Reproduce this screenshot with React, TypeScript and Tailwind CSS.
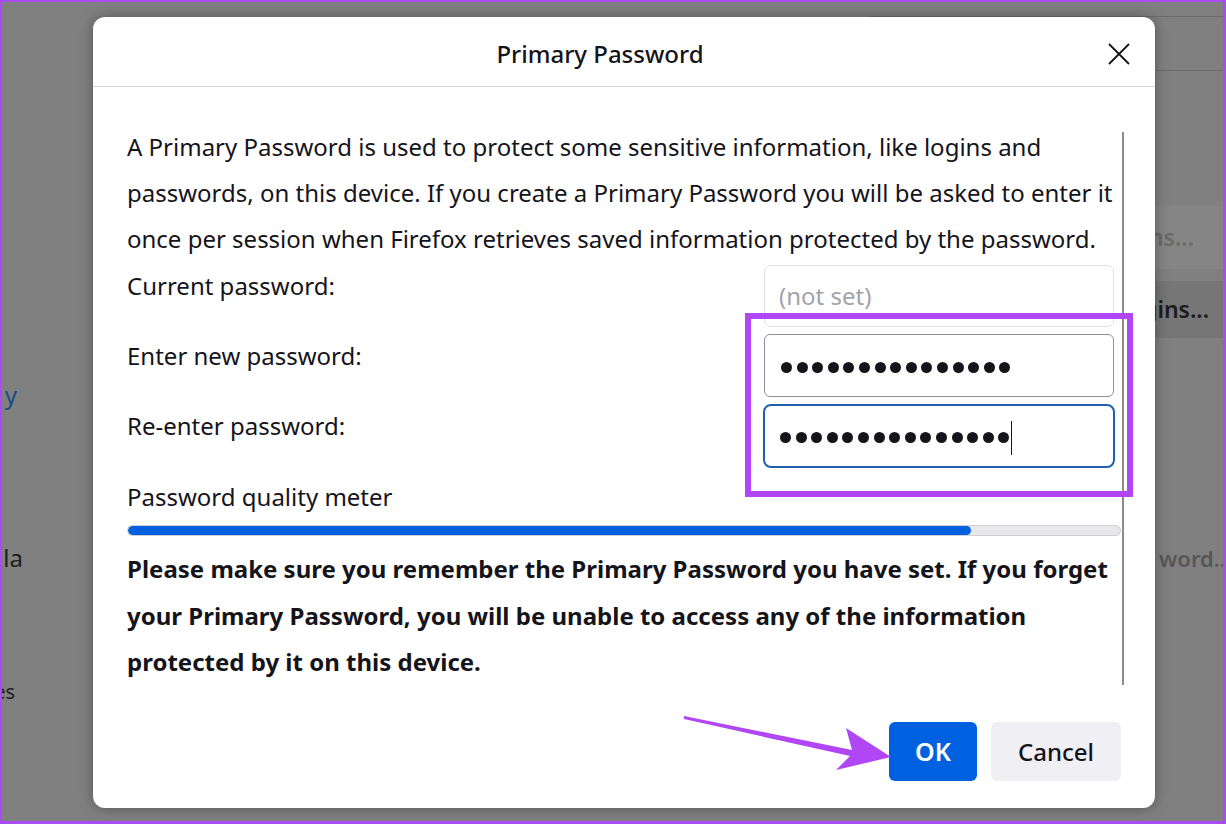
import React from "react";

const font = { fontFamily: '"Noto Sans", "Open Sans", sans-serif' };

function Dots({ n }: { n: number }) {
  return (
    <div className="flex items-center gap-[4.6px] mt-[3px]">
      {Array.from({ length: n }).map((_, i) => (
        <span key={i} className="block w-[11px] h-[11px] rounded-full bg-[#15141a]" />
      ))}
    </div>
  );
}

export default function App() {
  return (
    <div
      className="relative w-[1226px] h-[824px] overflow-hidden bg-[#808080] border-t-[2px] border-l-[2px] border-r-[3px] border-b-[3px] border-[#a94cf2]"
      style={font}
    >
      {/* background page (dimmed) */}
      <div className="flex h-full">
        <div className="w-[40px] flex flex-col text-[24px] leading-[30px] whitespace-nowrap overflow-hidden">
          <div className="mt-[378px] flex justify-end w-[15px] text-[#1d4d80]">y</div>
          <div className="mt-[133px] flex justify-end w-[21px] text-[#1e1e1e]">la</div>
          <div className="mt-[104px] flex justify-end w-[13px] text-[#1e1e1e] text-[20px]">es</div>
        </div>
        <div className="flex-1" />
        <div className="w-[358px] flex flex-col">
          <div className="mt-[14px] h-[55px] rounded-l-[6px] border border-r-0 border-[#6c6c6c]" />
          <div className="mt-[135px] h-[63px] bg-[#858585] flex items-center justify-end pr-[29px] text-[23px] font-semibold text-[#6a6a6a]">
            ns...
          </div>
          <div className="mt-[12px] h-[57px] bg-[#767676] flex items-center justify-end pr-[14px] text-[23px] font-semibold text-[#1c1c1c]">
            gins...
          </div>
          <div className="mt-[195px] h-[50px] flex items-center justify-end -mr-[9px] text-[22px] font-semibold text-[#575757] whitespace-nowrap">
            word...
          </div>
        </div>
      </div>

      {/* dialog */}
      <div className="absolute left-[91px] top-[15px] w-[1062px] h-[791px] bg-white rounded-[12px] shadow-[0_0_14px_rgba(0,0,0,0.35)] flex flex-col text-[#15141a]">
        <div className="relative h-[70px] shrink-0 border-b border-[#d4d4d8] flex items-center justify-center pr-[48px]">
          <div className="text-[24px] font-medium mt-[4px]">Primary Password</div>
          <svg
            className="absolute right-[24px] top-[25px]"
            width="24"
            height="24"
            viewBox="0 0 24 24"
            fill="none"
            stroke="#15141a"
            strokeWidth="1.8"
          >
            <path d="M2 2 L22 22 M22 2 L2 22" />
          </svg>
        </div>

        <div className="relative flex-1 flex flex-col pl-[34px] pr-[34px] pt-[37px]">
          <div className="absolute right-[31px] top-[45px] w-[2px] h-[553px] bg-[#8b8b8b]" />
          <p className="text-[24px] leading-[46px] whitespace-nowrap">
            A Primary Password is used to protect some sensitive information, like logins and
            <br />
            passwords, on this device. If you create a Primary Password you will be asked to enter it
            <br />
            once per session when Firefox retrieves saved information protected by the password.
          </p>

          <div className="flex flex-col gap-[7px] mt-[3px] pr-[7px] text-[24px]">
            <div className="flex justify-between">
              <div className="mt-[6px] leading-[30px]">Current password:</div>
              <div className="w-[350px] h-[62px] rounded-[6px] border border-[#e2e2e6] flex items-center pl-[14px] text-[#a3a3a8]">
                (not set)
              </div>
            </div>
            <div className="flex justify-between">
              <div className="mt-[7px] leading-[30px]">Enter new password:</div>
              <div className="w-[350px] h-[63px] rounded-[6px] border border-[#8f8f9d] flex items-center pl-[16px]">
                <Dots n={15} />
              </div>
            </div>
            <div className="flex justify-between">
              <div className="mt-[7px] leading-[30px]">Re-enter password:</div>
              <div className="w-[352px] -mr-[1px] h-[64px] rounded-[8px] border-[2.5px] border-[#1f60ad] flex items-center pl-[15px]">
                <Dots n={15} />
                <span className="ml-[2px] mt-[3px] w-[1px] h-[34px] bg-[#15141a]" />
              </div>
            </div>
          </div>

          <div className="mt-[14px] text-[24px] leading-[30px]">Password quality meter</div>
          <div className="mt-[13px] h-[11px] rounded-full bg-[#e8e8ea] border border-[#cfcfd4] overflow-hidden">
            <div className="h-full bg-[#0060df] rounded-full" style={{ width: "85%" }} />
          </div>

          <p className="mt-[10px] text-[24px] leading-[46.5px] font-bold whitespace-nowrap">
            Please make sure you remember the Primary Password you have set. If you forget
            <br />
            your Primary Password, you will be unable to access any of the information
            <br />
            protected by it on this device.
          </p>

          <div className="mt-auto mb-[27px] flex justify-end gap-[14px]">
            <button className="w-[88px] h-[59px] rounded-[6px] bg-[#0061e0] text-white text-[25px] font-semibold">
              OK
            </button>
            <button className="w-[130px] h-[59px] rounded-[6px] bg-[#f0f0f4] text-[#15141a] text-[24px] font-medium">
              Cancel
            </button>
          </div>
        </div>
      </div>

      {/* annotation highlight */}
      <div className="absolute left-[743px] top-[311px] w-[388px] h-[184px] border-[6px] border-[#b146f5]" />

      {/* annotation arrow */}
      <svg className="absolute left-0 top-0" width="1226" height="824" viewBox="-2 -2 1226 824">
        <polygon
          points="680,712 848,746 842,724 887,753 832,766 846,752 680,715"
          fill="#b146f5"
        />
      </svg>
    </div>
  );
}
